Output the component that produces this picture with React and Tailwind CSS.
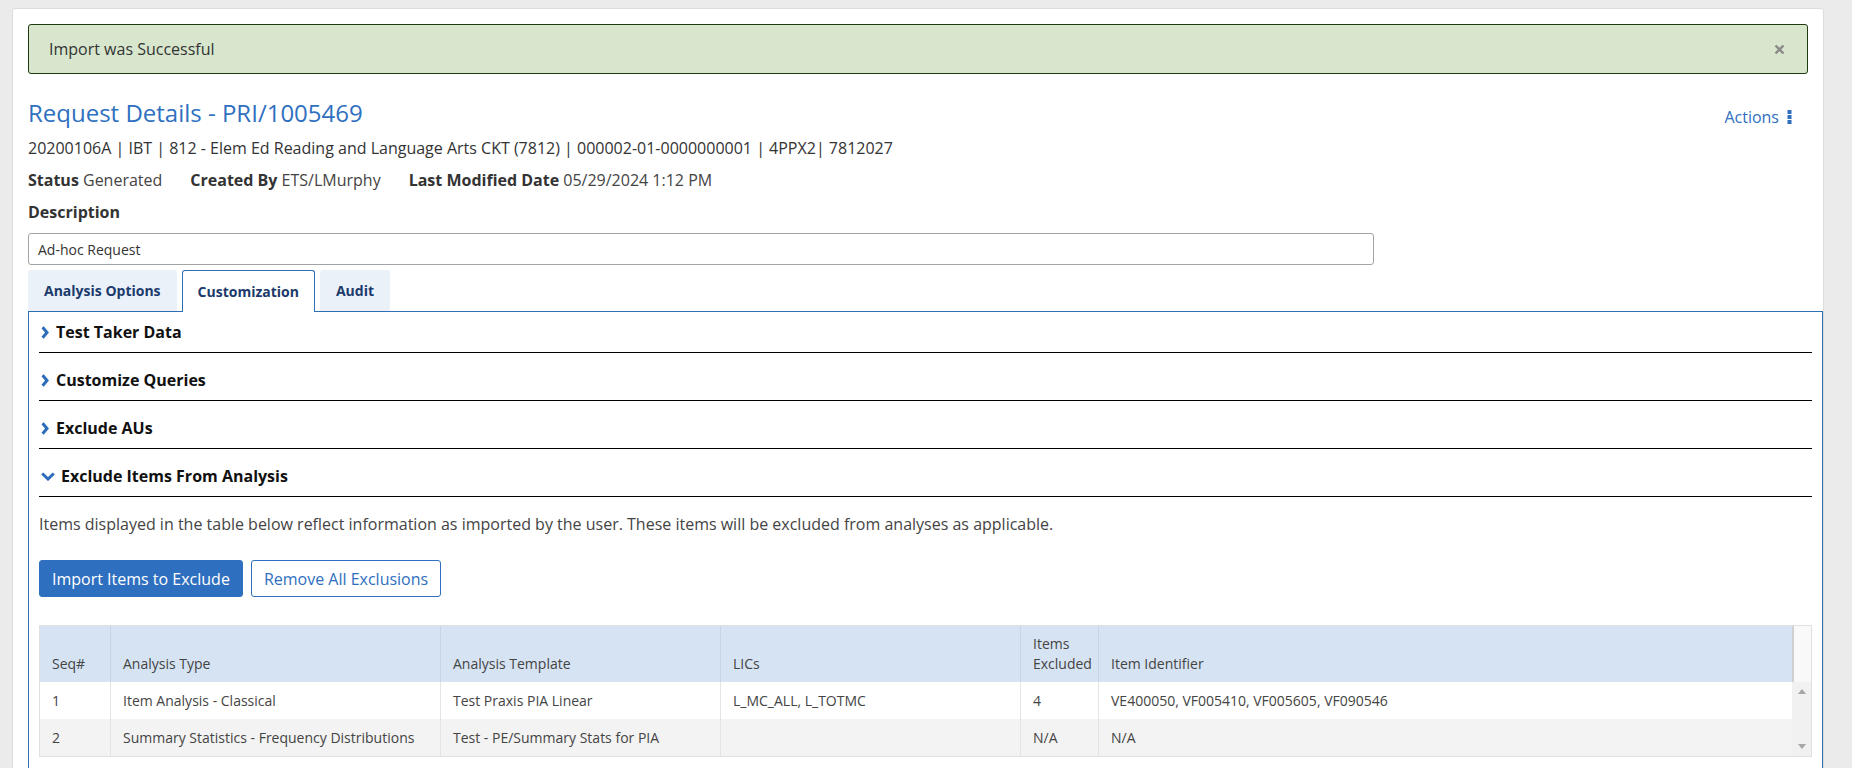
import React from "react";

const FONT = { fontFamily: '"Open Sans", "Noto Sans", sans-serif' };

function ChevronRight() {
  return (
    <svg width="8" height="13" viewBox="0 0 8 13" className="shrink-0">
      <path d="M1.6 1.2 L6 6.5 L1.6 11.8" fill="none" stroke="#2c6cb9" strokeWidth="3" />
    </svg>
  );
}

function ChevronDown() {
  return (
    <svg width="14" height="9" viewBox="0 0 14 9" className="shrink-0">
      <path d="M1.2 1.5 L7 7 L12.8 1.5" fill="none" stroke="#2c6cb9" strokeWidth="3" />
    </svg>
  );
}

function Section({ title, open, first }) {
  return (
    <div
      className={
        "flex items-center border-b border-black " +
        (first ? "pt-[8px] pb-[8px]" : "pt-[15px] pb-[8px]")
      }
    >
      <div className={open ? "w-[22px] flex items-center pl-[2px]" : "w-[17px] flex items-center pl-[2px]"}>
        {open ? <ChevronDown /> : <ChevronRight />}
      </div>
      <span className="text-[16px] leading-6 font-bold text-[#111]">{title}</span>
    </div>
  );
}

const cols = [
  { w: "w-[71px]", h: "Seq#" },
  { w: "w-[330px]", h: "Analysis Type" },
  { w: "w-[280px]", h: "Analysis Template" },
  { w: "w-[300px]", h: "LICs" },
  { w: "w-[78px]", h: "Items Excluded" },
];

const rows = [
  ["1", "Item Analysis - Classical", "Test Praxis PIA Linear", "L_MC_ALL, L_TOTMC", "4", "VE400050, VF005410, VF005605, VF090546"],
  ["2", "Summary Statistics - Frequency Distributions", "Test - PE/Summary Stats for PIA", "", "N/A", "N/A"],
];

export default function App() {
  return (
    <div className="h-[768px] overflow-hidden bg-[#ebebeb] pt-[8px] pl-[12px]" style={FONT}>
      <div className="w-[1812px] h-[800px] bg-white border border-[#dcdcdc] rounded-[3px] pl-[15px] pr-[15px] pt-[15px]">
        {/* Alert */}
        <div className="h-[50px] bg-[#d8e6cd] border border-[#1f3b0e] rounded-[3px] flex items-center justify-between pl-[20px] pr-[22px]">
          <span className="text-[16px] text-[#333]">Import was Successful</span>
          <svg width="11" height="11" viewBox="0 0 11 11">
            <path d="M1.5 1.5 L9.5 9.5 M9.5 1.5 L1.5 9.5" stroke="#8a8a8a" strokeWidth="2.4" />
          </svg>
        </div>

        {/* Title row */}
        <div className="flex items-start justify-between mt-[24px] pr-[16px]">
          <h1 className="text-[24px] leading-[29px] text-[#2f70c0]">Request Details - PRI/1005469</h1>
          <div className="flex items-center gap-[8px] mt-[7px] text-[16px] text-[#2f70c0]">
            <span>Actions</span>
            <svg width="5" height="14" viewBox="0 0 5 14">
              <rect x="0.5" y="0" width="4" height="4" fill="#2f6dbd" />
              <rect x="0.5" y="5" width="4" height="4" fill="#2f6dbd" />
              <rect x="0.5" y="10" width="4" height="4" fill="#2f6dbd" />
            </svg>
          </div>
        </div>

        <div className="mt-[7px] text-[16px] leading-6 text-[#333]">
          20200106A | IBT | 812 - Elem Ed Reading and Language Arts CKT (7812) | 000002-01-0000000001 | 4PPX2| 7812027
        </div>

        <div className="mt-[8px] flex gap-[28px] text-[16px] leading-6 text-[#444]">
          <span><b className="text-[#333]">Status</b> Generated</span>
          <span><b className="text-[#333]">Created By</b> ETS/LMurphy</span>
          <span><b className="text-[#333]">Last Modified Date</b> 05/29/2024 1:12 PM</span>
        </div>

        <div className="mt-[8px] text-[16px] leading-6 font-bold text-[#333]">Description</div>

        <div className="mt-[9px] w-[1346px] h-[32px] border border-[#a3a3a3] rounded-[3px] flex items-center pl-[9px] text-[14px] text-[#333]">
          Ad-hoc Request
        </div>

        {/* Tabs */}
        <div className="mt-[5px] flex gap-[5px]">
          <div className="h-[41px] px-[16px] flex items-center bg-[#ebf1f9] rounded-t-[3px] text-[14px] font-bold text-[#1c3a6b]">
            Analysis Options
          </div>
          <div className="h-[42px] -mb-px relative z-10 px-[15px] flex items-center bg-white border border-b-0 border-[#2f6db5] rounded-t-[3px] text-[14px] font-bold text-[#1c3a6b]">
            Customization
          </div>
          <div className="h-[41px] px-[16px] flex items-center bg-[#ebf1f9] rounded-t-[3px] text-[14px] font-bold text-[#1c3a6b]">
            Audit
          </div>
        </div>

        {/* Panel */}
        <div className="-mr-[15px] border border-[#2f6db5] px-[10px] pb-[40px]">
          <Section title="Test Taker Data" first />
          <Section title="Customize Queries" />
          <Section title="Exclude AUs" />
          <Section title="Exclude Items From Analysis" open />

          <p className="mt-[15px] text-[16px] leading-6 text-[#444]">
            Items displayed in the table below reflect information as imported by the user. These items will be excluded from analyses as applicable.
          </p>

          <div className="mt-[24px] flex gap-[8px]">
            <button className="h-[37px] px-[12px] bg-[#2f6fbf] text-white text-[16px] rounded-[3px] border border-[#2f6fbf]">
              Import Items to Exclude
            </button>
            <button className="h-[37px] px-[12px] bg-white text-[#2f6fbf] text-[16px] rounded-[3px] border border-[#2f6fbf]">
              Remove All Exclusions
            </button>
          </div>

          {/* Table */}
          <div className="mt-[28px] border border-[#e0e0e0] flex text-[14px] text-[#444]">
            <div className="flex-1 min-w-0">
              <div className="flex h-[56px] bg-[#d6e3f2]">
                {cols.map((c, i) => (
                  <div key={i} className={c.w + " border-r border-[#c8d5e4] flex items-end pl-[12px] pr-[4px] pb-[8px] leading-[20px]"}>
                    {c.h}
                  </div>
                ))}
                <div className="flex-1 flex items-end pl-[12px] pb-[8px] leading-[20px]">Item Identifier</div>
              </div>
              {rows.map((r, ri) => (
                <div key={ri} className={"flex h-[37px] " + (ri % 2 ? "bg-[#f3f3f3]" : "bg-white")}>
                  {cols.map((c, i) => (
                    <div key={i} className={c.w + " border-r border-[#e4e4e4] flex items-center pl-[12px]"}>
                      {r[i]}
                    </div>
                  ))}
                  <div className="flex-1 flex items-center pl-[12px]">{r[5]}</div>
                </div>
              ))}
            </div>
            <div className="w-[19px] flex flex-col">
              <div className="h-[56px] bg-[#f9f9f9] border-l-2 border-[#d0d0d0]"></div>
              <div className="flex-1 bg-[#f1f1f1] flex flex-col items-center justify-between py-[7px]">
                <svg width="8" height="5" viewBox="0 0 8 5"><path d="M0 5 L4 0 L8 5 Z" fill="#a6a6a6" /></svg>
                <svg width="8" height="5" viewBox="0 0 8 5"><path d="M0 0 L4 5 L8 0 Z" fill="#a6a6a6" /></svg>
              </div>
            </div>
          </div>
        </div>
      </div>
    </div>
  );
}
